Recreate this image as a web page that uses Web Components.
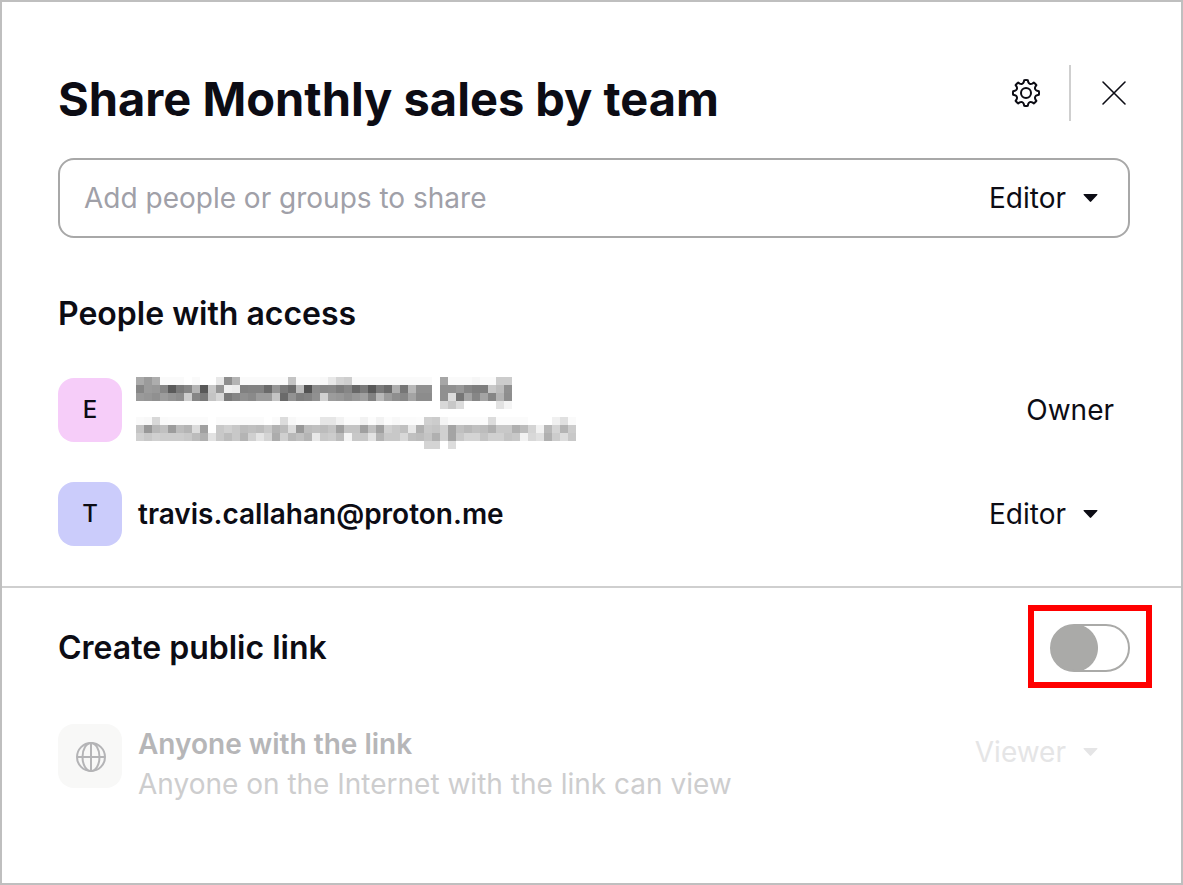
<!DOCTYPE html>
<html lang="en">
<head>
<meta charset="utf-8">
<title>Share Monthly sales by team</title>
<style>
  body { margin: 0; background: #fff; color: #0c0c14; font-family: Inter, "Liberation Sans", sans-serif; font-size: 28px; line-height: 40px; }
</style>
</head>
<body>
<share-dialog>
  <share-header slot="header">Share Monthly sales by team</share-header>
  <invite-field></invite-field>
  <access-section heading="People with access">
    <member-row initial="E" tone="pink">
      <redacted-lines></redacted-lines>
      <span slot="role">Owner</span>
    </member-row>
    <member-row initial="T" tone="blue">
      <b>travis.callahan@proton.me</b>
      <role-select slot="role" label="Role of travis.callahan@proton.me" value="Editor"></role-select>
    </member-row>
  </access-section>
  <public-link slot="footer"></public-link>
</share-dialog>

<script>
const define = (name, html, setup) => customElements.define(name, class extends HTMLElement {
  connectedCallback() {
    if (this.shadowRoot) return;
    const root = this.attachShadow({ mode: 'open' });
    root.innerHTML = html;
    if (setup) setup(this, root);
  }
});

define('share-dialog', `
  <style>
    :host { display: block; box-sizing: border-box; min-height: 100vh; border: 2px solid #bfbfbf; background: #fff; }
    .top { padding: 63px 51px 40px 56px; border-bottom: 2px solid #cfcfcf; }
    .bottom { padding: 36px 51px 40px 56px; }
  </style>
  <section class="top"><slot name="header"></slot><slot></slot></section>
  <section class="bottom"><slot name="footer"></slot></section>`);

define('share-header', `
  <style>
    :host { display: flex; align-items: flex-start; justify-content: space-between; margin-bottom: 25px; }
    h1 { margin: 0; font-size: 47px; line-height: 68px; font-weight: 700; }
    .actions { display: flex; align-items: center; }
    button { display: grid; place-items: center; width: 32px; height: 56px; padding: 0; border: 0; background: none; color: inherit; }
    svg { display: block; }
    .rule { width: 2px; height: 56px; margin: 0 27px; background: #cfcfcf; }
  </style>
  <h1><slot></slot></h1>
  <div class="actions">
    <button type="button" aria-label="Settings">
      <svg width="32" height="32" viewBox="-16 -16 32 32" fill="none" stroke="currentColor" stroke-width="2" stroke-linejoin="round"><circle r="5"/><path class="gear"/></svg>
    </button>
    <span class="rule"></span>
    <button type="button" aria-label="Close">
      <svg width="32" height="32" viewBox="0 0 32 32" fill="none" stroke="currentColor" stroke-width="1.6" stroke-linecap="round"><path d="M5 5 27 27M27 5 5 27"/></svg>
    </button>
  </div>`, (host, root) => {
  const point = (r, deg) => {
    const a = deg * Math.PI / 180;
    return (r * Math.cos(a)).toFixed(2) + ' ' + (r * Math.sin(a)).toFixed(2);
  };
  let d = 'M' + point(13, -8);
  for (let i = 0; i < 8; i++) {
    const a = i * 45;
    d += 'Q' + point(13.2, a) + ' ' + point(13, a + 8) +
         'L' + point(11.3, a + 11) +
         'C' + point(9.6, a + 17) + ' ' + point(9.6, a + 28) + ' ' + point(11.3, a + 34) +
         'L' + point(13, a + 37);
  }
  root.querySelector('.gear').setAttribute('d', d + 'Z');
});

define('role-select', `
  <style>
    :host { display: inline-flex; align-items: center; gap: 17px; padding-right: 32px; }
    select { appearance: none; field-sizing: content; height: 40px; margin: 0; padding: 0; border: 0; background: none; font: inherit; color: inherit; opacity: 1; }
    svg { display: block; }
  </style>
  <select></select>
  <svg width="15" height="9" viewBox="0 0 15 9" fill="currentColor"><path d="M1 0H14Q15 .3 14.3 1L8.2 7.6Q7.5 8.3 6.8 7.6L.7 1Q0 .3 1 0Z"/></svg>`, (host, root) => {
  const select = root.querySelector('select');
  select.setAttribute('aria-label', host.getAttribute('label'));
  select.add(new Option(host.getAttribute('value')));
  select.disabled = host.hasAttribute('disabled');
});

define('invite-field', `
  <style>
    :host { display: flex; align-items: center; box-sizing: border-box; height: 80px; padding-left: 24px; border: 2px solid #a8a8a8; border-radius: 16px; }
    input { flex: 1; min-width: 0; height: 40px; padding: 0; border: 0; outline: 0; background: none; font: inherit; color: inherit; }
    input::placeholder { color: #a0a0a8; opacity: 1; }
    role-select { margin-right: -2px; }
  </style>
  <input type="text" aria-label="Add people or groups to share" placeholder="Add people or groups to share">
  <role-select label="Role for new people" value="Editor"></role-select>`);

define('access-section', `
  <style>
    :host { display: block; margin-top: 56px; }
    h2 { margin: 0 0 44px; font-size: 32px; line-height: 40px; font-weight: 600; }
    .rows { display: grid; gap: 40px; }
  </style>
  <h2></h2><div class="rows"><slot></slot></div>`, (host, root) => {
  root.querySelector('h2').textContent = host.getAttribute('heading');
});

define('member-row', `
  <style>
    :host { display: flex; align-items: center; gap: 16px; height: 64px; }
    .avatar { display: grid; place-items: center; width: 64px; height: 64px; border-radius: 16px; font-size: 24px; font-weight: 500; background: #cbccfb; }
    :host([tone=pink]) .avatar { background: #f6cdf9; }
    .who { flex: 1; min-width: 0; }
    ::slotted(b) { font-weight: 600; }
    ::slotted(span) { padding-right: 16px; }
  </style>
  <span class="avatar"></span><div class="who"><slot></slot></div><slot name="role"></slot>`, (host, root) => {
  root.querySelector('.avatar').textContent = host.getAttribute('initial');
});

/* Name and address hidden behind a mosaic: one two-digit grey level per 8px cell. */
define('redacted-lines', `
  <style>
    :host { display: block; margin-left: -2px; padding-top: 6px; }
    svg { display: block; }
  </style>
  <svg width="440" height="72" viewBox="0 0 440 72" shape-rendering="crispEdges" role="img" aria-label="Hidden name and address"></svg>`, (host, root) => {
  const rows = {
    0: 'aa 9b ad fa fa fa ff fa ff ff e8 8e b4 fa fa fa fa fa fa c4 fa fa fa f8 e8 d4 ce fa fa fa fa fa fa fa fa fa fa ff a6 fa fa fa f6 fa fa cc cc',
    8: '86 9b 98 86 5a 7a 86 b4 58 c8 96 f0 ec 80 82 82 6a 96 7a 6c bc 52 8c 86 88 7c 86 68 7a 58 7a 6a ae 76 b8 90 90 ff 90 90 98 86 7e 7e c8 bc 90',
    16: '9a 96 90 9c 94 8e ce 86 7a c4 d6 7a 86 90 8a 9c 9c c4 6a 92 7e 82 90 d0 9c 98 90 98 a0 82 b8 9c 8e 88 a4 8c 8c ff 90 dc 76 a4 86 a4 86 b4 8e',
    24: '-38 d8 c8 dc ff ff ff ff e2 f4',
    40: 'fa f8 d8 fa fb fb fb fb fb ff fb fb fb fb fb fb ff fb dc f8 fc fc fc e6 e6 f2 fc fc f2 fc f2 fc f8 fb fb fc d0 cc f4 fb fb fb fb fb dc fb fb fb fb ff ff ff f0 e0 fa',
    48: 'c4 98 b8 c0 9c bc b4 dc a0 ff c8 d0 c8 bc c0 bc c8 b2 bc dc 98 bc c0 bc c4 a0 c4 c4 a0 c0 a0 d0 c8 c0 e8 b0 c8 c4 d0 a4 c0 b8 c0 bc b0 c8 c8 b0 bc d4 f2 b8 d4 b4 cc',
    56: 'd0 c8 d0 cc cc cc c8 bc b0 e2 c8 bc c8 b4 d0 e4 d4 ac d0 b8 c0 b4 e8 c8 cc bc f4 c8 c8 e2 b4 c8 c8 d8 c0 bc c4 b0 d0 a4 c8 d4 d4 c4 d0 d0 c4 c8 f2 d8 e0 b0 cc dc c8',
    64: '-36 d4 d4 ff dc'
  };
  let out = '';
  for (const [y, text] of Object.entries(rows)) {
    const cells = text.split(' ');
    const start = cells[0][0] === '-' ? +cells.shift().slice(1) : 0;
    cells.forEach((g, i) => {
      if (g !== 'ff') out += `<rect x="${(start + i) * 8}" y="${y}" width="8" height="8" fill="#${g}${g}${g}"/>`;
    });
  }
  root.querySelector('svg').innerHTML = out;
});

define('toggle-switch', `
  <style>
    :host { display: block; position: relative; width: 80px; height: 48px; }
    input { appearance: none; display: block; box-sizing: border-box; width: 80px; height: 48px; margin: 0; border: 2px solid #aaaaa8; border-radius: 24px; background: radial-gradient(circle at 22px 22px, #aaaaa8 23.5px, #fff 24.5px); background-origin: padding-box; }
    .frame { position: absolute; inset: -19px -22px -16px; border: 6px solid #f00; pointer-events: none; }
  </style>
  <input type="checkbox" role="switch" aria-label="Create public link"><span class="frame"></span>`);

define('public-link', `
  <style>
    :host { display: block; }
    header { display: flex; align-items: center; justify-content: space-between; margin-bottom: 52px; }
    h2 { margin: 0; font-size: 32px; line-height: 40px; font-weight: 600; }
    .row { display: flex; align-items: flex-start; gap: 16px; }
    .icon { display: grid; place-items: center; width: 64px; height: 64px; border-radius: 16px; background: #f8f8f7; color: #b4b4b6; }
    .text { flex: 1; min-width: 0; color: #cdcdce; }
    p { margin: 0; }
    p:first-child { font-weight: 600; color: #b6b6b8; }
    role-select { color: #e5e5e6; padding-top: 8px; }
  </style>
  <header><h2>Create public link</h2><toggle-switch></toggle-switch></header>
  <div class="row">
    <span class="icon"><svg width="32" height="32" viewBox="0 0 32 32" fill="none" stroke="currentColor" stroke-width="2"><circle cx="17" cy="17" r="14"/><ellipse cx="17" cy="17" rx="8.5" ry="14"/><path d="M17 3V31M3 17H31"/></svg></span>
    <div class="text"><p>Anyone with the link</p><p>Anyone on the Internet with the link can view</p></div>
    <role-select label="Link role" value="Viewer" disabled></role-select>
  </div>`);
</script>
</body>
</html>
